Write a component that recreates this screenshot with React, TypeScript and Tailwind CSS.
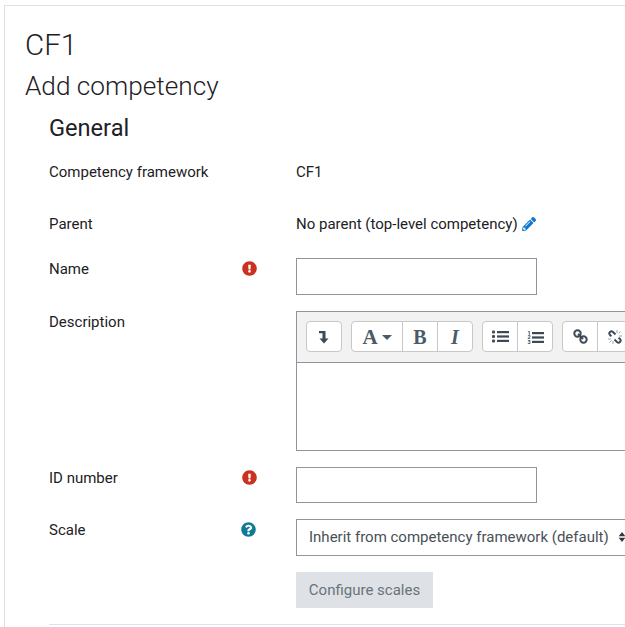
import type { ReactNode } from 'react'
import { FaExclamationCircle, FaQuestionCircle, FaPencilAlt } from 'react-icons/fa'

function FormRow({ label, icon, className, children }: { label: string; icon?: ReactNode; className?: string; children: ReactNode }) {
  return (
    <div className={`flex ${className ?? ''}`}>
      <div className="flex w-[247px] shrink-0 justify-between pr-[39px] text-[15px] leading-[22px] text-[#1d2125]">
        <span>{label}</span>
        {icon}
      </div>
      <div className="min-w-0 flex-1 text-[15px] leading-[22px] text-[#1d2125]">{children}</div>
    </div>
  )
}

function ToolButton({ children, first }: { children: ReactNode; first?: boolean }) {
  return (
    <div className={`flex h-[29px] items-center justify-center text-[#4b5a68] ${first ? 'w-[34px]' : 'w-[35px] border-l border-[#c8c8c8]'}`}>
      {children}
    </div>
  )
}

function ToolGroup({ children, className }: { children: ReactNode; className?: string }) {
  return (
    <div className={`flex shrink-0 overflow-hidden rounded-[4px] border border-[#c8c8c8] bg-white ${className ?? ''}`}>{children}</div>
  )
}

function BulletListIcon() {
  return (
    <svg viewBox="0 0 17 13" className="h-[13px] w-[17px]" fill="#3d4a55">
      <rect x="0" y="0.5" width="3" height="3" rx="1" />
      <rect x="0" y="5" width="3" height="3" rx="1" />
      <rect x="0" y="9.5" width="3" height="3" rx="1" />
      <rect x="5" y="1" width="12" height="2.2" />
      <rect x="5" y="5.4" width="12" height="2.2" />
      <rect x="5" y="9.8" width="12" height="2.2" />
    </svg>
  )
}

function NumberListIcon() {
  return (
    <svg viewBox="0 0 17 14" className="h-[14px] w-[17px]" fill="#3d4a55">
      <text x="0.5" y="4.5" fontSize="5.5" fontWeight="700" fontFamily="Roboto, sans-serif">1</text>
      <text x="0.5" y="9" fontSize="5.5" fontWeight="700" fontFamily="Roboto, sans-serif">2</text>
      <text x="0.5" y="13.5" fontSize="5.5" fontWeight="700" fontFamily="Roboto, sans-serif">3</text>
      <rect x="5" y="2" width="12" height="2.2" />
      <rect x="5" y="6.4" width="12" height="2.2" />
      <rect x="5" y="10.8" width="12" height="2.2" />
    </svg>
  )
}

function LinkIcon() {
  return (
    <svg viewBox="0 0 15 15" className="h-[15px] w-[15px]" fill="none" stroke="#3d4a55" strokeWidth="2">
      <circle cx="4.5" cy="4.5" r="3.2" />
      <circle cx="10.5" cy="10.5" r="3.2" />
      <path d="M5 5l5 5" />
    </svg>
  )
}

function UnlinkIcon() {
  return (
    <svg viewBox="0 0 16 16" className="h-[16px] w-[16px]" fill="none" stroke="#3d4a55" strokeWidth="1.9">
      <path d="M8.5 5.5L6 3C4 1.2 1 3.8 3 6l1.5 1.2" />
      <path d="M7.5 10.5L10 13c2 1.8 5-.8 3-3l-1.5-1.2" />
      <path d="M10 1v3M13.5 2.5L11.5 4.5M15 7h-3M1 10h3M2.5 13.5L4.5 11.5M6 15v-3" stroke="#9aa5ad" strokeWidth="1" />
    </svg>
  )
}

export default function App() {
  return (
    <div className="h-[627px] w-[625px] overflow-hidden bg-white pl-[4px] pt-[5px] font-['Roboto',sans-serif]">
      <div className="h-[640px] w-[700px] border-l border-t border-[#e0e0e0] pl-[20px] pt-[21px]">
        <h1 className="text-[29.5px] font-light leading-[36px] text-[#1d2125]">CF1</h1>
        <h2 className="mt-[5px] text-[26.2px] font-light leading-[36px] text-[#1d2125]">Add competency</h2>

        <div className="pl-[24px]">
          <h3 className="mt-[9px] text-[23.6px] leading-[30px] text-[#1d2125]">General</h3>

          <FormRow label="Competency framework" className="mt-[18px]">CF1</FormRow>

          <FormRow label="Parent" className="mt-[30px]">
            <span className="flex items-center gap-[4px]">
              No parent (top-level competency)
              <FaPencilAlt className="h-[14px] w-[14px] text-[#1177d1]" />
            </span>
          </FormRow>

          <FormRow
            label="Name"
            className="mt-[23px]"
            icon={<FaExclamationCircle className="mt-[3px] h-[15px] w-[15px] text-[#ca3120]" />}
          >
            <input className="block h-[37px] w-[241px] border border-[#8f959e] bg-white" />
          </FormRow>

          <FormRow label="Description" className="mt-[16px]">
            <div className="w-[400px] border border-[#8f959e]">
              <div className="flex h-[51px] items-start gap-[9px] border-b border-[#8f959e] bg-[#f2f2f2] pl-[9px] pt-[9px]">
                <ToolGroup>
                  <ToolButton first>
                    <svg viewBox="0 0 12 14" className="h-[14px] w-[12px]" fill="#3d4a55">
                      <path d="M1 1h6.5v7.5H10.5L6 13.5 1.5 8.5h3V3.2H1z" />
                    </svg>
                  </ToolButton>
                </ToolGroup>
                <ToolGroup>
                  <div className="flex h-[29px] w-[50px] items-center justify-center gap-[4px] text-[#4b5a68]">
                    <span className="mt-[1px] font-['Liberation_Serif',serif] text-[21px] font-bold leading-none">A</span>
                    <span className="mt-[1px] h-0 w-0 border-x-[5px] border-t-[5px] border-x-transparent border-t-[#4b5a68]" />
                  </div>
                  <ToolButton>
                    <span className="font-['Liberation_Serif',serif] text-[20px] font-bold leading-none">B</span>
                  </ToolButton>
                  <ToolButton>
                    <span className="font-['Liberation_Serif',serif] text-[20px] font-bold italic leading-none">I</span>
                  </ToolButton>
                </ToolGroup>
                <ToolGroup>
                  <ToolButton first>
                    <BulletListIcon />
                  </ToolButton>
                  <ToolButton>
                    <NumberListIcon />
                  </ToolButton>
                </ToolGroup>
                <ToolGroup>
                  <ToolButton first>
                    <LinkIcon />
                  </ToolButton>
                  <ToolButton>
                    <UnlinkIcon />
                  </ToolButton>
                </ToolGroup>
              </div>
              <div className="h-[87px] bg-white" />
            </div>
          </FormRow>

          <FormRow
            label="ID number"
            className="mt-[16px]"
            icon={<FaExclamationCircle className="mt-[3px] h-[15px] w-[15px] text-[#ca3120]" />}
          >
            <input className="block h-[36px] w-[241px] border border-[#8f959e] bg-white" />
          </FormRow>

          <FormRow
            label="Scale"
            className="mt-[16px]"
            icon={<FaQuestionCircle className="mr-[1px] mt-[3px] h-[15px] w-[15px] text-[#0f7a94]" />}
          >
            <div className="flex h-[37px] w-[400px] items-center border border-[#8f959e] pb-[1px] pl-[12px] text-[#495057]">
              <span>Inherit from competency framework (default)</span>
              <svg viewBox="0 0 8 12" className="ml-[9px] h-[10px] w-[8px]" fill="#343a40">
                <path d="M4 0l4 5H0zM4 12L0 7h8z" />
              </svg>
            </div>
            <button className="mt-[16px] block h-[36px] w-[137px] bg-[#dee2e6] text-center text-[15px] text-[#6a737b]">
              Configure scales
            </button>
          </FormRow>

          <div className="mt-[16px] border-t border-[#dee2e6]" />
        </div>
      </div>
    </div>
  )
}
